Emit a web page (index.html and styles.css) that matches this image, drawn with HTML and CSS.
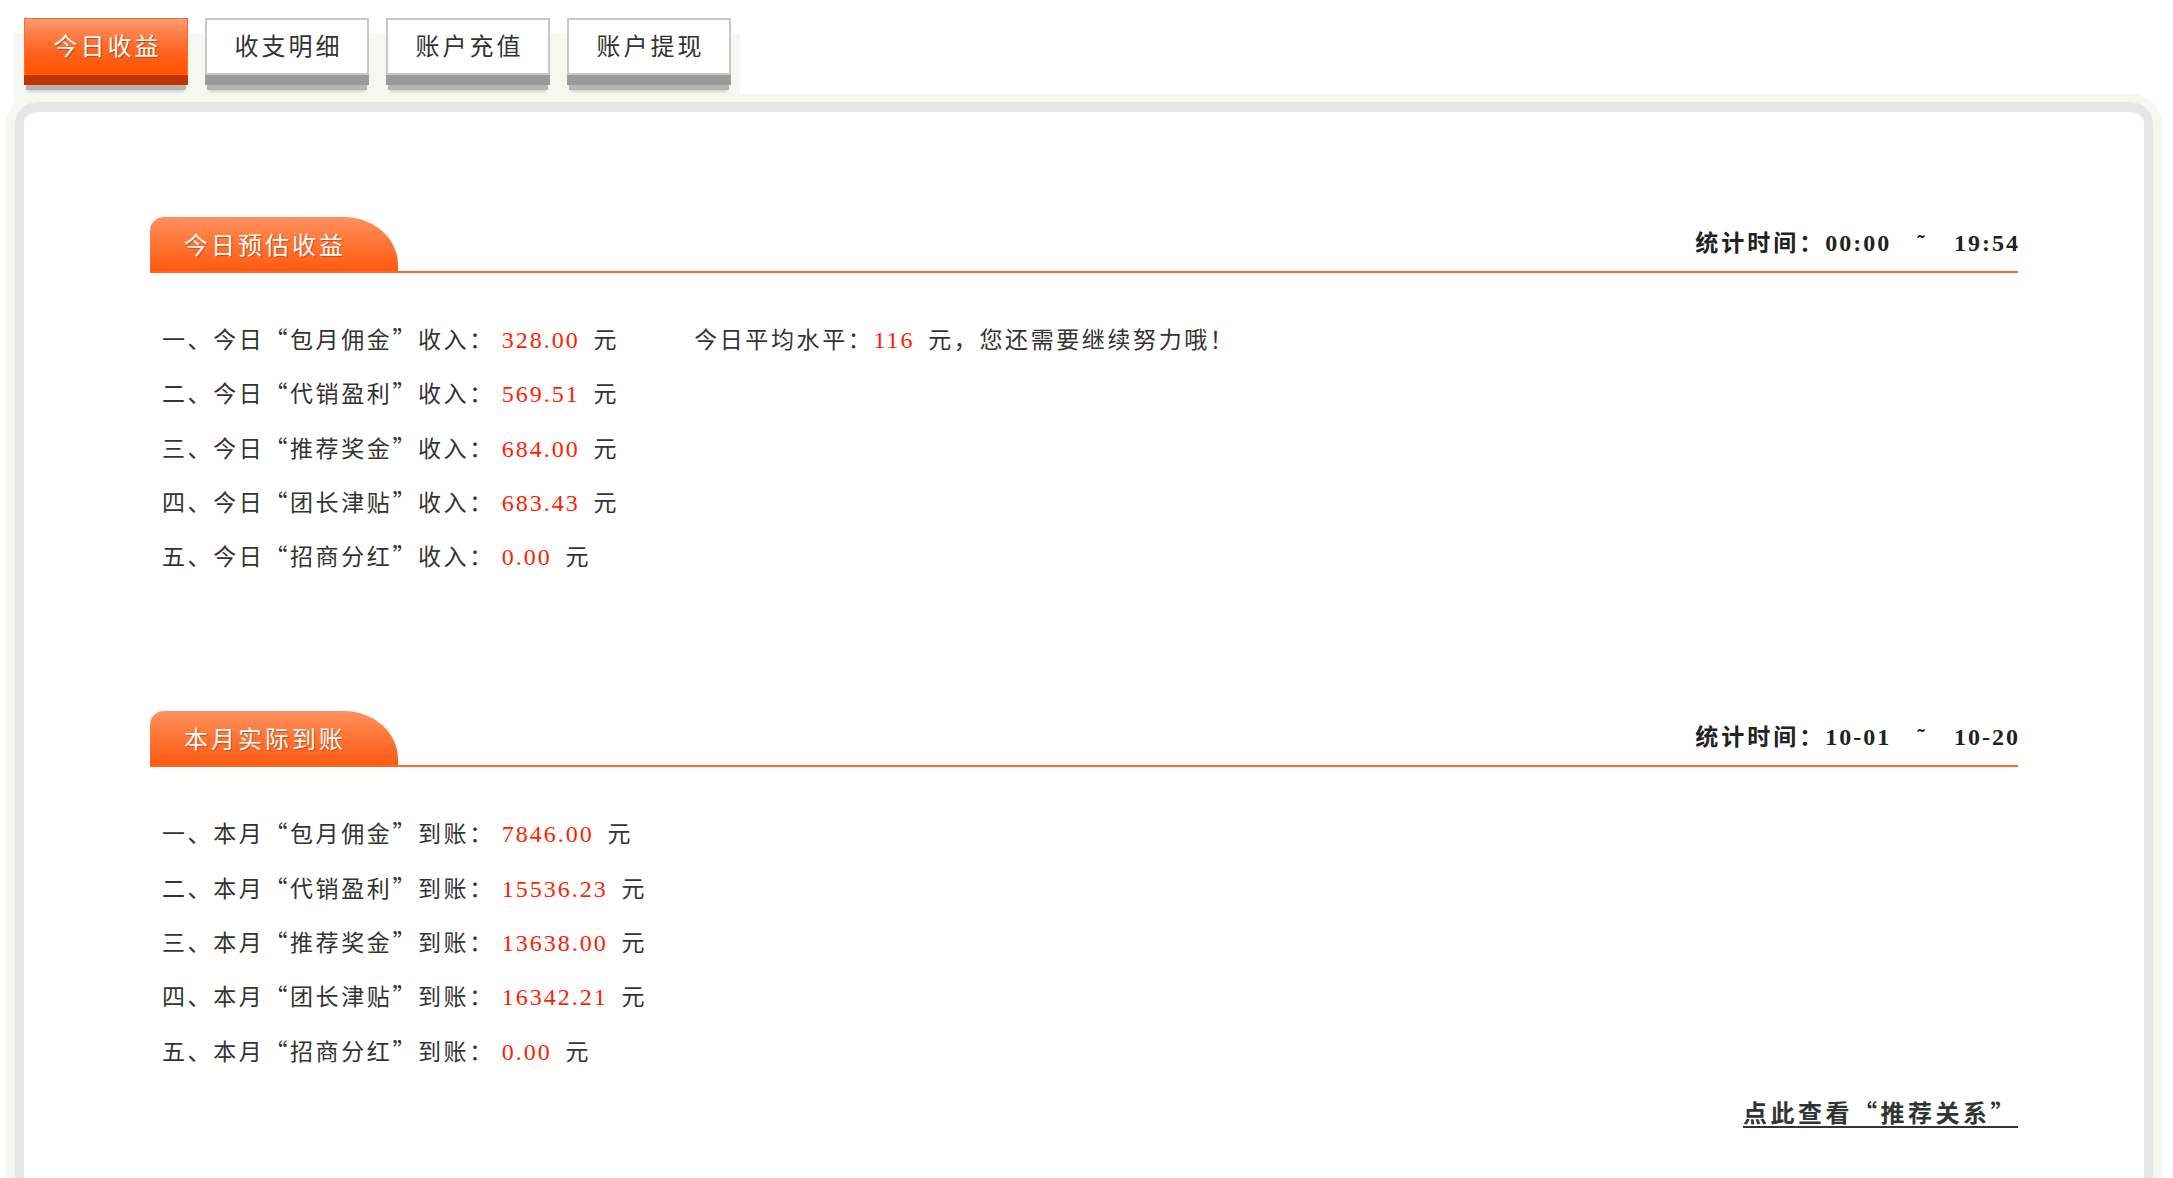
FILE: index.html
```html
<!DOCTYPE html>
<html lang="zh-CN">
<head>
    <meta charset="utf-8">
    <title>今日收益</title>
    <link rel="stylesheet" href="styles.css">
</head>
<body>
    <div class="page">
        <div class="tabs">
            <a class="tab active">今日收益</a>
            <a class="tab">收支明细</a>
            <a class="tab">账户充值</a>
            <a class="tab">账户提现</a>
        </div>

        <div class="panel">
            <div class="panel-inner">

                <div class="section">
                    <div class="sec-head">
                        <span class="sec-title">今日预估收益</span>
                        <span class="sec-time">统计时间：<span class="en">00:00</span><span class="tilde">˜</span><span class="en">19:5<span class="last">4</span></span></span>
                    </div>
                    <ul class="rows">
                        <li>一、今日“包月佣金”收入：<span class="num">328.00</span> 元<span class="avg">今日平均水平：<span class="num">116</span> 元，您还需要继续努力哦！</span></li>
                        <li>二、今日“代销盈利”收入：<span class="num">569.51</span> 元</li>
                        <li>三、今日“推荐奖金”收入：<span class="num">684.00</span> 元</li>
                        <li>四、今日“团长津贴”收入：<span class="num">683.43</span> 元</li>
                        <li>五、今日“招商分红”收入：<span class="num">0.00</span> 元</li>
                    </ul>
                </div>

                <div class="section second">
                    <div class="sec-head">
                        <span class="sec-title">本月实际到账</span>
                        <span class="sec-time">统计时间：<span class="en">10-01</span><span class="tilde">˜</span><span class="en">10-2<span class="last">0</span></span></span>
                    </div>
                    <ul class="rows">
                        <li>一、本月“包月佣金”到账：<span class="num">7846.00</span> 元</li>
                        <li>二、本月“代销盈利”到账：<span class="num">15536.23</span> 元</li>
                        <li>三、本月“推荐奖金”到账：<span class="num">13638.00</span> 元</li>
                        <li>四、本月“团长津贴”到账：<span class="num">16342.21</span> 元</li>
                        <li>五、本月“招商分红”到账：<span class="num">0.00</span> 元</li>
                    </ul>
                    <div class="more"><a href="#">点此查看“推荐关系”</a></div>
                </div>

            </div>
        </div>
    </div>
</body>
</html>
```

FILE: styles.css
```css
* { margin: 0; padding: 0; box-sizing: border-box; }
html, body { height: 100%; overflow: hidden; background: #fff; }
body {
    font-family: "Noto Sans CJK SC", "Liberation Serif", serif;
    color: #333;
}
.page {
    padding: 18px 11px 0 6px;
}

/* tabs */
.tabs {
    position: relative;
    z-index: 2;
    display: flex;
    gap: 17px;
    height: 76px;
    padding-left: 18px;
}
.tab {
    position: relative;
    display: block;
    width: 164px;
    height: 57px;
    border: 2px solid #c8c8c8;
    background: #fff;
    color: #333;
    font-size: 24px;
    letter-spacing: 3px;
    line-height: 49px;
    text-align: center;
    text-indent: 3px;
    cursor: pointer;
    box-shadow: 0 10px 0 #9a9a9a, 0 17px 0 -2px #b4b4b4, 0 21px 2px -4px #d2d2d2;
}
.tab::before {
    content: "";
    position: absolute;
    left: -11px;
    right: -11px;
    top: 14px;
    bottom: -26px;
    background: #f5f7f0;
    z-index: -1;
}
.tab.active {
    border: 1px solid #ff6a30;
    background: linear-gradient(to bottom, #ff9c70 0%, #ff8048 25%, #ff6420 60%, #ff5200 100%);
    color: #fff;
    line-height: 51px;
    text-shadow: 1px 1px 1px rgba(130, 40, 0, 0.55);
    box-shadow: 0 10px 0 #c03400, 0 17px 0 -2px #b4b4b4, 0 21px 2px -4px #d2d2d2;
}

/* panel */
.panel {
    border: 9px solid #f5f7f0;
    border-top-width: 8px;
    border-bottom: none;
    border-radius: 30px 30px 0 0;
}
.panel-inner {
    border: 9px solid #e6e6e6;
    border-top-width: 10px;
    border-bottom: none;
    border-radius: 22px 22px 0 0;
    background: #fff;
    padding: 105px 126px 120px;
}

/* sections */
.section.second { margin-top: 129px; }
.sec-head {
    display: flex;
    justify-content: space-between;
    align-items: flex-end;
    border-bottom: 2px solid #ff6622;
}
.sec-title {
    width: 248px;
    height: 54px;
    padding-left: 34px;
    border-radius: 14px 54px 0 0 / 14px 48px 0 0;
    background: linear-gradient(to bottom, #ff9060 0%, #ff7838 45%, #ff5a12 100%);
    color: #fff;
    font-size: 24px;
    letter-spacing: 3px;
    line-height: 54px;
    text-shadow: 1px 1px 1px rgba(140, 40, 0, 0.5);
}
.sec-time {
    margin-bottom: 16px;
    font-size: 23px;
    letter-spacing: 3px;
    line-height: 23px;
    color: #222;
    font-weight: bold;
}
.sec-time .en {
    font-family: "Liberation Serif", serif;
    font-size: 24px;
    letter-spacing: 2px;
}
.sec-time .last { letter-spacing: 0; }
.tilde {
    font-family: "Liberation Serif", serif;
    margin: 0 26px 0 26px;
}

.rows {
    list-style: none;
    margin-top: 38px;
    padding-left: 12px;
}
.rows li {
    font-size: 23px;
    line-height: 54.3px;
    letter-spacing: 2.6px;
    height: 54.3px;
    white-space: nowrap;
}
.num {
    font-family: "Liberation Serif", serif;
    font-size: 24px;
    letter-spacing: 2px;
    color: #ff1e00;
    margin-left: 7px;
    margin-right: 6px;
}
.avg {
    margin-left: 75px;
}
.avg .num { margin-left: 0; margin-right: 6px; }

.more {
    margin-top: 15px;
    line-height: 40px;
    text-align: right;
}
.more a {
    color: #333;
    font-size: 24px;
    letter-spacing: 3.5px;
    font-weight: bold;
    text-decoration: underline;
    text-decoration-thickness: 2px;
    text-underline-offset: 4px;
}
```
